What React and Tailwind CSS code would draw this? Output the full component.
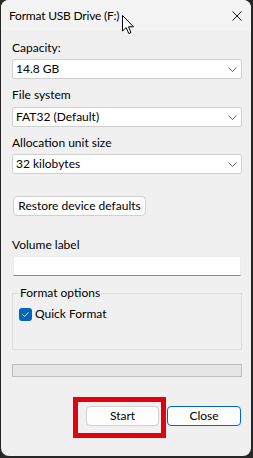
import React from "react";

const font = { fontFamily: "Lato, 'Noto Sans', sans-serif" };

function Chevron() {
  return (
    <svg width="9" height="5" viewBox="0 0 9 5" className="shrink-0">
      <path d="M0.5 0.5 L4.5 4.5 L8.5 0.5" fill="none" stroke="#5f5f5f" strokeWidth="1" />
    </svg>
  );
}

function Select({ value }) {
  return (
    <div className="h-[20px] w-full bg-white border border-[#d0d0d0] rounded-[2px] flex items-center pl-[3px] pr-[4px] justify-between">
      <span className="leading-[16px] text-[12px] text-black">{value}</span>
      <Chevron />
    </div>
  );
}

function Label({ children, className }) {
  return <div className={"h-[16px] leading-[16px] text-[12px] text-black " + className}>{children}</div>;
}

export default function App() {
  return (
    <div className="relative w-[253px] h-[458px] bg-[#262626] pl-[1px] pr-[2px] pb-[2px]" style={font}>
      <div className="h-full rounded-[8px] bg-[#f0f0f0] overflow-hidden flex flex-col">
        <div className="h-[31px] shrink-0 bg-[#f3f3f3] flex items-center justify-between pl-[8px] pr-[9px]">
          <span className="text-[12px] leading-[16px] tracking-[-0.2px] text-black">Format USB Drive (F:)</span>
          <svg width="10" height="10" viewBox="0 0 10 10">
            <path d="M0.5 0.5 L9.5 9.5 M9.5 0.5 L0.5 9.5" stroke="#1a1a1a" strokeWidth="1" />
          </svg>
        </div>
        <div className="flex flex-col pl-[11px] pr-[9px]">
          <Label className="mt-[9px]">Capacity:</Label>
          <div className="mt-[3px]"><Select value="14.8 GB" /></div>
          <Label className="mt-[8px]">File system</Label>
          <div className="mt-[4px]"><Select value="FAT32 (Default)" /></div>
          <Label className="mt-[8px]">Allocation unit size</Label>
          <div className="mt-[3px]"><Select value="32 kilobytes" /></div>
          <div className="mt-[22px] ml-[1px] w-[133px] h-[20px] bg-[#fdfdfd] border border-[#d0d0d0] rounded-[4px] flex items-center justify-center text-[12px] leading-[16px] text-black">
            Restore device defaults
          </div>
          <Label className="mt-[21px]">Volume label</Label>
          <div className="mt-[3px] mx-[1px] h-[20px] bg-white border border-[#ececec] border-b-[#8a8a8a]" />
          <div className="relative mt-[17px] h-[57px] border border-[#dcdcdc]">
            <span className="absolute -top-[9px] left-[6px] px-[1px] bg-[#f0f0f0] text-[12px] leading-[16px] text-black">Format options</span>
            <div className="pt-[12px] pl-[6px] flex items-center gap-[3px]">
              <div className="w-[13px] h-[13px] rounded-[3px] bg-[#0067c0] flex items-center justify-center">
                <svg width="13" height="13" viewBox="0 0 13 13">
                  <path d="M3.5 6.5 L5.5 8.5 L9.5 4.5" fill="none" stroke="#ffffff" strokeWidth="1" />
                </svg>
              </div>
              <span className="text-[12px] leading-[16px] text-black">Quick Format</span>
            </div>
          </div>
          <div className="mt-[14px] h-[13px] bg-[#e6e6e6] border border-[#bcbcbc]" />
          <div className="mt-[29px] flex justify-end gap-[8px] pr-[1px]">
            <div className="w-[73px] h-[20px] bg-[#fdfdfd] border border-[#d0d0d0] rounded-[4px] flex items-center justify-center text-[12px] leading-[16px] text-black">
              Start
            </div>
            <div className="w-[74px] h-[20px] bg-[#fdfdfd] border border-[#0067c0] rounded-[4px] flex items-center justify-center text-[12px] leading-[16px] text-black">
              Close
            </div>
          </div>
        </div>
      </div>
      <div className="absolute left-[73px] top-[397px] w-[93px] h-[41px] border-[5px] border-[#e3000f]" />
      <svg className="absolute left-[122px] top-[15px]" width="13" height="20" viewBox="0 0 13 20">
        <path d="M0.5 0.5 L0.5 16 L4.2 12.5 L6.8 18.5 L9 17.5 L6.5 11.8 L11.5 11.8 Z" fill="#ffffff" stroke="#000000" strokeWidth="1" strokeLinejoin="round" />
      </svg>
    </div>
  );
}
